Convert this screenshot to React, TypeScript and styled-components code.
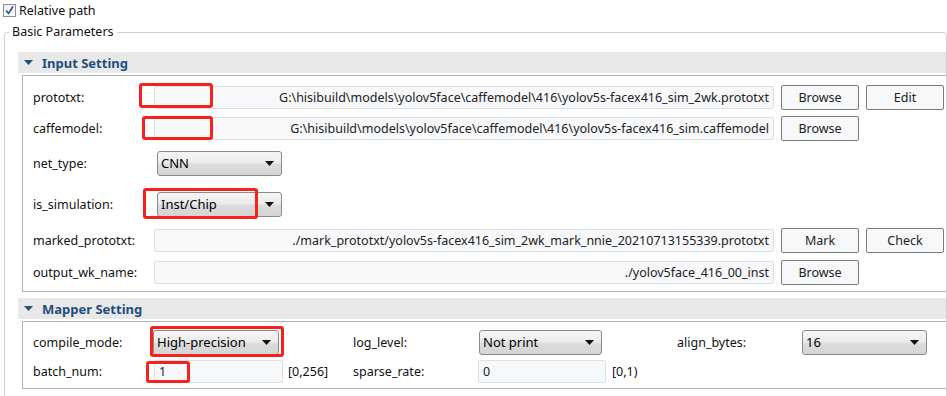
import styled, { createGlobalStyle } from 'styled-components'

const GlobalStyle = createGlobalStyle`
    body {
        margin: 0;
        background: #ffffff;
        font-family: "Noto Sans", "Open Sans", sans-serif;
        font-size: 12.5px;
        color: #111;
    }
`

const Page = styled.div`
    width: 947px;
    height: 396px;
    overflow: hidden;
    position: relative;
`

const CheckRow = styled.div`
    display: flex;
    align-items: center;
    gap: 3px;
    height: 19px;
    padding: 1px 0 0 3px;
`

const CheckBox = styled.div`
    width: 11px;
    height: 11px;
    border: 1px solid #8f8f8f;
    background: linear-gradient(#f0f0f0, #ffffff);
    display: flex;
    align-items: center;
    justify-content: center;
`

const Fieldset = styled.fieldset`
    margin: 5px 0 0 4px;
    padding: 13px 0 0 13px;
    border: 1px solid #d0d0d0;
    border-radius: 3px;
    height: 380px;
`

const Legend = styled.legend`
    padding: 0 3px;
    margin-left: -9px;
    line-height: 14px;
`

const SectionBar = styled.div`
    display: flex;
    align-items: center;
    height: 21px;
    background: #e8e8e8;
    padding-left: 6px;
    gap: 9px;
    margin-top: ${(p: { $top: number }) => p.$top}px;
`

const SectionTitle = styled.span`
    font-weight: bold;
    font-size: 13px;
    color: #1f4e7f;
`

const SectionBody = styled.div`
    margin: 2px 0 0 4px;
    border: 1px solid #b4b4b4;
    border-right: none;
    padding: ${(p: { $pad: string }) => p.$pad};
    display: flex;
    flex-direction: column;
`

const Row = styled.div`
    display: flex;
    align-items: center;
    height: ${(p: { $h: number }) => p.$h}px;
`

const Label = styled.div`
    width: ${(p: { $w: number }) => p.$w}px;
    flex-shrink: 0;
    white-space: nowrap;
`

const Field = styled.div`
    position: relative;
    flex-shrink: 0;
`

const TextBox = styled.div`
    box-sizing: border-box;
    width: ${(p: { $w: number; $align?: string }) => p.$w}px;
    height: 23px;
    border: 1px solid #dcdfe3;
    border-radius: 2px;
    background: #f7f8fa;
    display: flex;
    align-items: center;
    justify-content: ${(p) => (p.$align === 'left' ? 'flex-start' : 'flex-end')};
    padding: 0 4px;
    overflow: hidden;
    white-space: nowrap;
    color: #222;
`

const SelectBox = styled.div`
    box-sizing: border-box;
    width: ${(p: { $w: number }) => p.$w}px;
    height: 25px;
    border: 1px solid #8a8a8a;
    border-radius: 3px;
    background: linear-gradient(#f5f5f5 0%, #ececec 45%, #dcdcdc 55%, #d4d4d4 100%);
    display: flex;
    align-items: center;
    justify-content: space-between;
    padding: 0 7px 0 3px;
    color: #000;
    font-size: 13px;
`

const Button = styled.button`
    box-sizing: border-box;
    width: 78px;
    height: 25px;
    margin-left: ${(p: { $ml: number }) => p.$ml}px;
    border: 1px solid #7a7a7a;
    border-radius: 2px;
    background: #f7f8fa;
    font-family: inherit;
    font-size: 12.5px;
    color: #222;
    padding: 0;
`

const Range = styled.span`
    margin-left: ${(p: { $ml: number }) => p.$ml}px;
    width: ${(p: { $w: number; $ml: number }) => p.$w}px;
    flex-shrink: 0;
`

const Gap = styled.div`
    width: ${(p: { $w: number }) => p.$w}px;
    flex-shrink: 0;
`

const Marker = styled.div`
    position: absolute;
    left: ${(p: { $l: number; $t: number; $w: number; $h: number }) => p.$l}px;
    top: ${(p) => p.$t}px;
    width: ${(p) => p.$w}px;
    height: ${(p) => p.$h}px;
    box-sizing: border-box;
    border: 3px solid #f5211d;
    border-radius: 3px;
    pointer-events: none;
`

const Caret = () => (
    <svg width="9" height="5" viewBox="0 0 9 5">
        <path d="M0 0 L9 0 L4.5 5 Z" fill="#111" />
    </svg>
)

const Fold = () => (
    <svg width="9" height="5" viewBox="0 0 9 5">
        <path d="M0 0 L9 0 L4.5 5 Z" fill="#1f4e7f" />
    </svg>
)

const Tick = () => (
    <svg width="11" height="11" viewBox="0 0 11 11">
        <path d="M2 5.5 L4.5 8.5 L9 1.5" stroke="#2b4f8f" strokeWidth="1.6" fill="none" />
    </svg>
)

const App = (): JSX.Element => {
    return (
        <Page>
            <GlobalStyle />
            <CheckRow>
                <CheckBox><Tick /></CheckBox>
                <span>Relative path</span>
            </CheckRow>
            <Fieldset>
                <Legend>Basic Parameters</Legend>

                <SectionBar $top={0}>
                    <Fold />
                    <SectionTitle>Input Setting</SectionTitle>
                </SectionBar>
                <SectionBody $pad="5px 0 3px 10px">
                    <Row $h={32}>
                        <Label $w={121}>prototxt:</Label>
                        <Field>
                            <TextBox $w={620}>G:\hisibuild\models\yolov5face\caffemodel\416\yolov5s-facex416_sim_2wk.prototxt</TextBox>
                            <Marker $l={-15} $t={-3} $w={74} $h={25} />
                        </Field>
                        <Button $ml={7}>Browse</Button>
                        <Button $ml={7}>Edit</Button>
                    </Row>
                    <Row $h={30}>
                        <Label $w={121}>caffemodel:</Label>
                        <Field>
                            <TextBox $w={620}>G:\hisibuild\models\yolov5face\caffemodel\416\yolov5s-facex416_sim.caffemodel</TextBox>
                            <Marker $l={-12} $t={-1} $w={71} $h={24} />
                        </Field>
                        <Button $ml={7}>Browse</Button>
                    </Row>
                    <Row $h={40}>
                        <Label $w={124}>net_type:</Label>
                        <SelectBox $w={125}>CNN<Caret /></SelectBox>
                    </Row>
                    <Row $h={42}>
                        <Label $w={124}>is_simulation:</Label>
                        <Field>
                            <SelectBox $w={125}>Inst/Chip<Caret /></SelectBox>
                            <Marker $l={-14} $t={-4} $w={115} $h={31} />
                        </Field>
                    </Row>
                    <Row $h={31}>
                        <Label $w={121}>marked_prototxt:</Label>
                        <TextBox $w={620}>./mark_prototxt/yolov5s-facex416_sim_2wk_mark_nnie_20210713155339.prototxt</TextBox>
                        <Button $ml={7}>Mark</Button>
                        <Button $ml={7}>Check</Button>
                    </Row>
                    <Row $h={32}>
                        <Label $w={121}>output_wk_name:</Label>
                        <TextBox $w={620}>./yolov5face_416_00_inst</TextBox>
                        <Button $ml={7}>Browse</Button>
                    </Row>
                </SectionBody>

                <SectionBar $top={6}>
                    <Fold />
                    <SectionTitle>Mapper Setting</SectionTitle>
                </SectionBar>
                <SectionBody $pad="5px 0 3px 10px">
                    <Row $h={30}>
                        <Label $w={120}>compile_mode:</Label>
                        <Field>
                            <SelectBox $w={126}>High-precision<Caret /></SelectBox>
                            <Marker $l={-3} $t={-4} $w={134} $h={31} />
                        </Field>
                        <Gap $w={74} />
                        <Label $w={126}>log_level:</Label>
                        <SelectBox $w={123}>Not print<Caret /></SelectBox>
                        <Gap $w={75} />
                        <Label $w={125}>align_bytes:</Label>
                        <SelectBox $w={125}>16<Caret /></SelectBox>
                    </Row>
                    <Row $h={28}>
                        <Label $w={121}>batch_num:</Label>
                        <Field>
                            <TextBox $w={129} $align="left">1</TextBox>
                            <Marker $l={-8} $t={1} $w={44} $h={22} />
                        </Field>
                        <Range $ml={5} $w={65}>[0,256]</Range>
                        <Label $w={125}>sparse_rate:</Label>
                        <TextBox $w={128} $align="left">0</TextBox>
                        <Range $ml={6} $w={40}>[0,1)</Range>
                    </Row>
                </SectionBody>
            </Fieldset>
        </Page>
    )
}

export default App
